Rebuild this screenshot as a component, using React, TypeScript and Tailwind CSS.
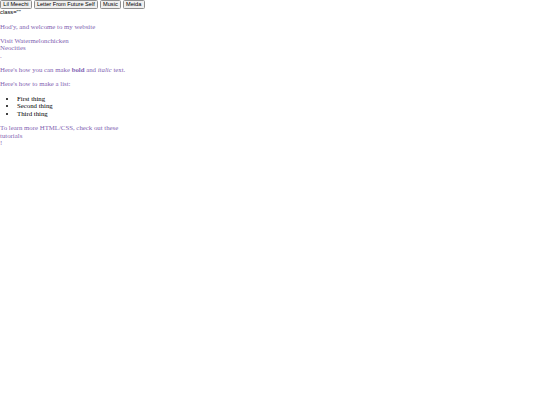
export default function App() {
  const buttons = ["Lil Meechi", "Letter From Future Self", "Music", "Meida"];

  return (
    <div className="bg-white min-h-screen text-black font-['Liberation_Serif',serif] text-[6.8px] leading-[7.6px]">
      <nav className="flex gap-[1.8px]">
        {buttons.map((b) => (
          <button
            key={b}
            className="h-[9px] px-[2.3px] bg-[#efefef] border border-[#8f8f8f] rounded-[1.5px] font-['Liberation_Sans',sans-serif] text-[5.6px] leading-none text-black"
          >
            {b}
          </button>
        ))}
      </nav>
      <div className="font-['Liberation_Sans',sans-serif] text-[5.8px] leading-[7px]">class=""</div>

      <main className="text-[#7f63b2]">
        <p className="my-[6.6px]">Hod'y, and welcome to my website</p>

        <p className="my-[6.6px]">
          Visit Watermelonchicken
          <br />
          Neocities
          <br />.
        </p>

        <p className="my-[6.6px]">
          Here's how you can make <strong className="font-bold">bold</strong> and <em className="italic">italic</em> text.
        </p>

        <p className="my-[6.6px]">Here's how to make a list:</p>

        <ul className="my-[6.6px] pl-[17px] list-disc text-black">
          <li>First thing</li>
          <li>Second thing</li>
          <li>Third thing</li>
        </ul>

        <p className="my-[6.6px]">
          To learn more HTML/CSS, check out these
          <br />
          tutorials
          <br />!
        </p>
      </main>
    </div>
  );
}
